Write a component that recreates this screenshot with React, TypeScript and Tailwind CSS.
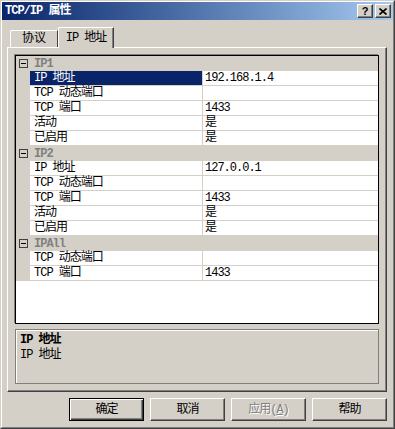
import React from "react";

const sim = "font-['Liberation_Mono','Noto_Sans_CJK_SC',monospace] text-[12px] tracking-[-1px]";
const raised =
  "border border-t-white border-l-white border-r-[#404040] border-b-[#404040] shadow-[inset_-1px_-1px_0_#808080]";

type Group = { name: string; rows: [string, string][] };

const groups: Group[] = [
  {
    name: "IP1",
    rows: [
      ["IP 地址", "192.168.1.4"],
      ["TCP 动态端口", ""],
      ["TCP 端口", "1433"],
      ["活动", "是"],
      ["已启用", "是"],
    ],
  },
  {
    name: "IP2",
    rows: [
      ["IP 地址", "127.0.0.1"],
      ["TCP 动态端口", ""],
      ["TCP 端口", "1433"],
      ["活动", "是"],
      ["已启用", "是"],
    ],
  },
  {
    name: "IPAll",
    rows: [
      ["TCP 动态端口", ""],
      ["TCP 端口", "1433"],
    ],
  },
];

function GroupRow({ name }: { name: string }) {
  return (
    <div className="flex h-[15px] items-center bg-[#d4d0c8]">
      <div className="flex w-[14px] justify-center">
        <div className="flex h-[9px] w-[9px] items-center justify-center border border-[#404040]">
          <div className="h-px w-[5px] bg-black" />
        </div>
      </div>
      <span className={`${sim} pl-[4px] font-bold leading-none text-[#808080]`}>{name}</span>
    </div>
  );
}

function PropRow({ label, value, selected }: { label: string; value: string; selected?: boolean }) {
  return (
    <div className="flex h-[15px]">
      <div className="w-[14px] bg-[#d4d0c8]" />
      <div
        className={`flex w-[172px] items-center border-b border-[#d4d0c8] pl-[4px] leading-none ${sim} ${
          selected ? "bg-[#0a246a] text-white" : "text-black"
        }`}
      >
        {label}
      </div>
      <div className="w-px bg-[#d4d0c8]" />
      <div className={`flex flex-1 items-center border-b border-[#d4d0c8] pl-[2px] leading-none text-black ${sim}`}>
        {value}
      </div>
    </div>
  );
}

export default function App() {
  return (
    <div className="h-[429px] w-[395px] border border-[#404040] border-l-[#d4d0c8] border-t-[#d4d0c8] bg-[#d4d0c8]">
      <div className="flex h-full flex-col border border-[#808080] border-l-white border-t-white">
        {/* title bar */}
        <div className="flex h-[18px] items-center justify-between bg-gradient-to-r from-[#0a246a] to-[#a6caf0] pl-[3px] pr-[2px]">
          <span className={`${sim} font-bold leading-none text-white`}>TCP/IP 属性</span>
          <div className="flex gap-[2px]">
            <div
              className={`flex h-[14px] w-[16px] items-center justify-center bg-[#d4d0c8] ${raised} font-['Liberation_Sans',sans-serif] text-[11px] font-bold leading-none text-black`}
            >
              ?
            </div>
            <div className={`flex h-[14px] w-[16px] items-center justify-center bg-[#d4d0c8] ${raised}`}>
              <svg width="8" height="7" viewBox="0 0 8 7">
                <path d="M0.5 0.5 L7.5 6.5 M7.5 0.5 L0.5 6.5" stroke="#000" strokeWidth="1.6" />
              </svg>
            </div>
          </div>
        </div>

        {/* tabs */}
        <div className="mt-[7px] flex h-[20px] items-end pl-[8px]">
          <div
            className={`flex h-[17px] w-[48px] items-center justify-center rounded-tl-[2px] border-l border-t border-r border-white border-r-[#404040] ${sim} leading-none tracking-normal text-black`}
          >
            协议
          </div>
          <div
            className={`relative z-10 -mb-px flex h-[21px] w-[56px] items-center justify-center rounded-tl-[2px] border-l border-t border-r border-white border-r-[#404040] bg-[#d4d0c8] shadow-[inset_-1px_0_0_#808080] ${sim} leading-none text-black`}
          >
            IP 地址
          </div>
        </div>

        {/* panel */}
        <div className={`ml-[5px] mr-[6px] flex h-[345px] flex-col p-[7px] ${raised}`}>
          <div className="flex h-[271px] flex-col border border-black bg-white shadow-[-1px_-1px_0_#808080]">
            {groups.map((g, gi) => (
              <div key={g.name}>
                <GroupRow name={g.name} />
                {g.rows.map(([l, v], i) => (
                  <PropRow key={l + i} label={l} value={v} selected={gi === 0 && i === 0} />
                ))}
              </div>
            ))}
          </div>
          <div className="mt-[5px] flex h-[55px] flex-col gap-[3px] border border-[#808080] px-[4px] pt-[4px] shadow-[inset_1px_1px_0_#fff]">
            <span className={`${sim} font-bold leading-[12px] text-black`}>IP 地址</span>
            <span className={`${sim} leading-[12px] text-black`}>IP 地址</span>
          </div>
        </div>

        {/* buttons */}
        <div className="mt-[6px] flex justify-end gap-[6px] pr-[6px]">
          <button
            className={`flex h-[23px] w-[75px] items-center justify-center border border-black bg-[#d4d0c8] shadow-[inset_1px_1px_0_#fff,inset_-1px_-1px_0_#404040,inset_-2px_-2px_0_#808080] ${sim} leading-none text-black`}
          >
            确定
          </button>
          <button className={`flex h-[23px] w-[75px] items-center justify-center bg-[#d4d0c8] ${raised} ${sim} leading-none text-black`}>
            取消
          </button>
          <button
            className={`flex h-[23px] w-[75px] items-center justify-center bg-[#d4d0c8] ${raised} ${sim} leading-none text-[#808080] [text-shadow:1px_1px_0_#fff]`}
          >
            应用(<span className="underline">A</span>)
          </button>
          <button className={`flex h-[23px] w-[75px] items-center justify-center bg-[#d4d0c8] ${raised} ${sim} leading-none text-black`}>
            帮助
          </button>
        </div>
      </div>
    </div>
  );
}
